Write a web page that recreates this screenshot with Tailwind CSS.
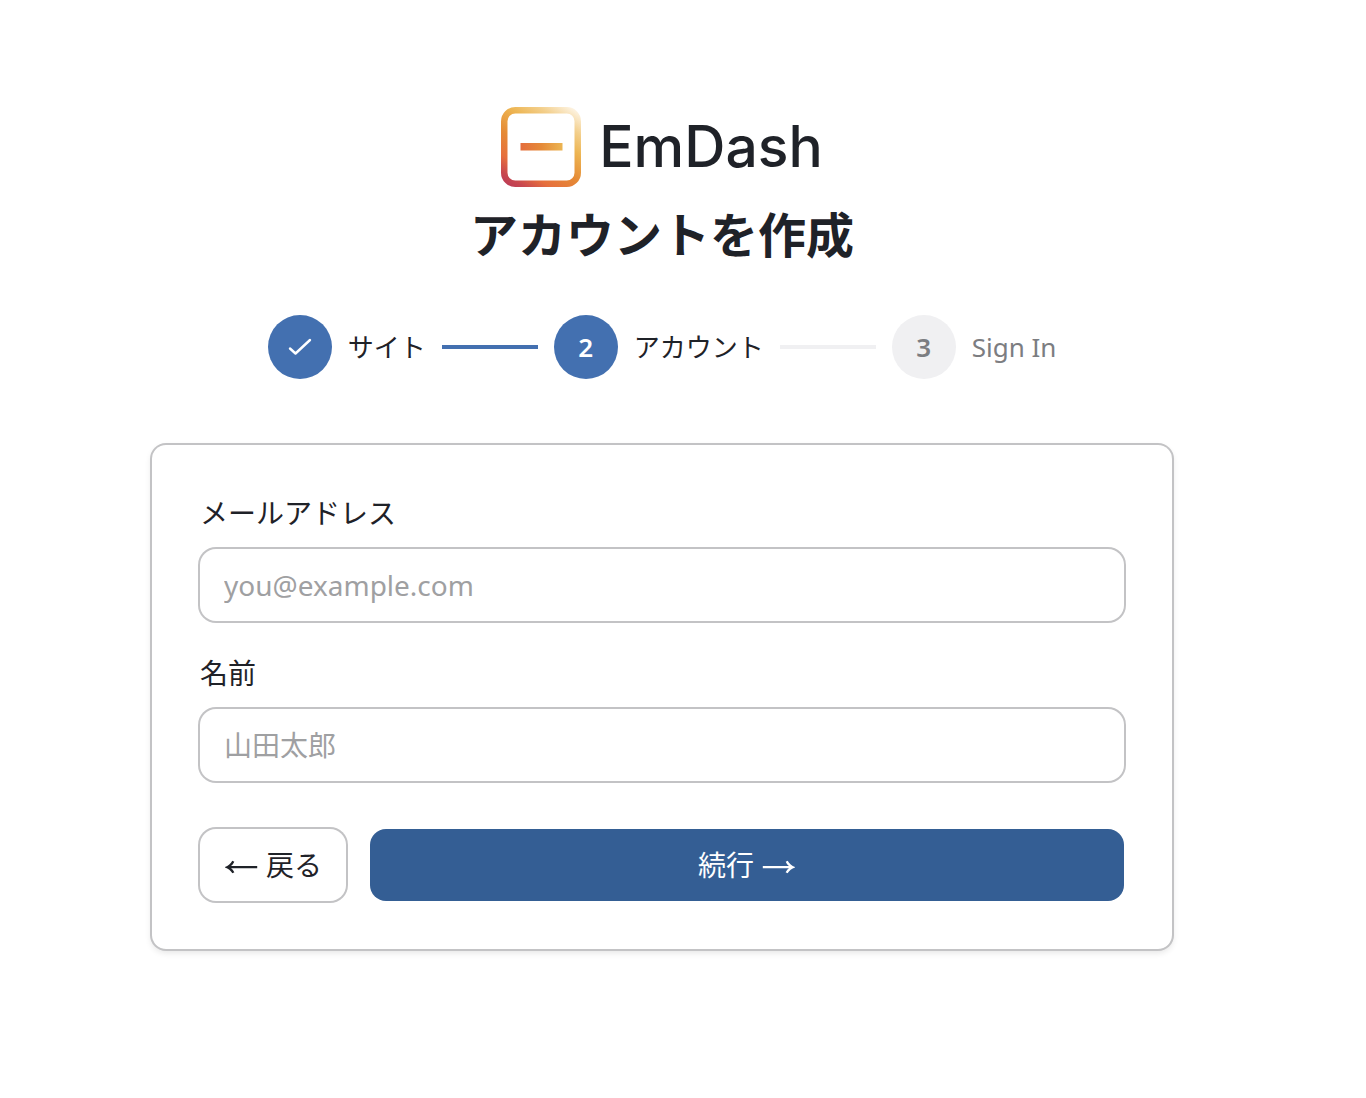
<!DOCTYPE html>
<html lang="ja">
<head>
    <meta charset="UTF-8">
    <meta name="viewport" content="width=device-width, initial-scale=1.0">
    <title>アカウントを作成 - EmDash</title>
    <script src="https://cdn.jsdelivr.net/npm/@tailwindcss/browser@4"></script>
</head>
<body class="min-h-screen bg-white pr-[42px] font-['Noto_Sans','Noto_Sans_CJK_JP',sans-serif] text-[#1f2228]">
    <main class="mx-auto w-full max-w-[1020px] pt-[107px] pb-16">
        <header class="flex flex-col items-center">
            <div class="flex items-center gap-[18px]">
                <svg class="size-20" viewBox="0 0 80 80" fill="none" aria-hidden="true">
                    <defs>
                        <linearGradient id="frame" x1="12" y1="82" x2="68" y2="-2" gradientUnits="userSpaceOnUse">
                            <stop offset="0" stop-color="#bd3c55"/>
                            <stop offset="0.08" stop-color="#c8474f"/>
                            <stop offset="0.22" stop-color="#e66f3d"/>
                            <stop offset="0.42" stop-color="#e58a35"/>
                            <stop offset="0.65" stop-color="#edb552"/>
                            <stop offset="0.82" stop-color="#f3cf8c"/>
                            <stop offset="1" stop-color="#fdf4e4"/>
                        </linearGradient>
                        <linearGradient id="dash" x1="19" y1="0" x2="62" y2="0" gradientUnits="userSpaceOnUse">
                            <stop offset="0" stop-color="#e46c3c"/>
                            <stop offset="0.5" stop-color="#e58a38"/>
                            <stop offset="1" stop-color="#ecb653"/>
                        </linearGradient>
                    </defs>
                    <rect x="3.25" y="3.25" width="73.5" height="73.5" rx="11" stroke="url(#frame)" stroke-width="6.5"/>
                    <rect x="19.5" y="36" width="42" height="7.5" fill="url(#dash)"/>
                </svg>
                <span class="font-['Inter',sans-serif] text-[57px] leading-20 font-medium">EmDash</span>
            </div>
            <h1 class="mt-4 text-5xl leading-16 font-bold">アカウントを作成</h1>
        </header>

        <!-- Steps -->
        <ol class="mt-12 flex items-center justify-center gap-4 text-[26px] leading-10">
            <li class="flex items-center gap-4">
                <span class="flex size-16 items-center justify-center rounded-full bg-[#4370b0] text-white">
                    <svg class="size-7" viewBox="0 0 28 28" fill="none" stroke="currentColor" stroke-width="2.4" stroke-linecap="round" stroke-linejoin="round" aria-hidden="true">
                        <path d="M4 15.5l5.5 5L24 7"/>
                    </svg>
                </span>
                <span>サイト</span>
            </li>
            <li class="h-1 w-24 bg-[#4370b0]" aria-hidden="true"></li>
            <li class="flex items-center gap-4" aria-current="step">
                <span class="flex size-16 items-center justify-center rounded-full bg-[#4370b0] font-semibold text-white">2</span>
                <span>アカウント</span>
            </li>
            <li class="h-1 w-24 bg-[#f0f0f2]" aria-hidden="true"></li>
            <li class="flex items-center gap-4 text-[#7c7d81]">
                <span class="flex size-16 items-center justify-center rounded-full bg-[#f0f0f2] font-semibold">3</span>
                <span>Sign In</span>
            </li>
        </ol>

        <!-- Account form -->
        <form class="mt-[66px] rounded-[14px] p-12 text-[28px] leading-10 ring-2 ring-[#c3c3c5] shadow-[0_3px_6px_1px_rgba(0,0,0,0.1)]">
            <label for="email" class="block">メールアドレス</label>
            <input type="email" id="email" placeholder="you@example.com" class="mt-4 block h-18 w-full rounded-2xl px-6 ring-2 ring-[#c3c3c5] placeholder:text-[#9fa0a2] focus:outline-none focus:ring-[#4370b0]">
            <label for="name" class="mt-8 block">名前</label>
            <input type="text" id="name" placeholder="山田太郎" class="mt-4 block h-18 w-full rounded-2xl px-6 ring-2 ring-[#c3c3c5] placeholder:text-[#9fa0a2] focus:outline-none focus:ring-[#4370b0]">
            <div class="mt-12 flex gap-6">
                <button type="button" class="flex h-18 items-center gap-2 rounded-2xl px-6 ring-2 ring-[#c3c3c5] hover:bg-gray-50">
                    <svg class="h-8 w-[34px]" viewBox="0 0 34 32" aria-hidden="true">
                        <path fill="currentColor" d="M1 17.9C4.2 16.8 6.8 14.7 8.3 11.7L10.3 12.7C9.5 14.5 8.3 16 7 17H33.2V19.2H7C8.4 20.2 9.6 21.6 10.4 23.3L8.4 24.3C6.8 21.4 4.2 19.3 1 18.4Z"/>
                    </svg>
                    戻る
                </button>
                <button type="submit" class="flex h-18 flex-1 items-center justify-center gap-2 rounded-2xl bg-[#345e94] text-white hover:bg-[#4370b0]">
                    続行
                    <svg class="h-8 w-[34px]" viewBox="0 0 34 32" aria-hidden="true">
                        <path fill="currentColor" d="M33 17.9C29.8 16.8 27.2 14.7 25.7 11.7L23.7 12.7C24.5 14.5 25.7 16 27 17H0.8V19.2H27C25.6 20.2 24.4 21.6 23.6 23.3L25.6 24.3C27.2 21.4 29.8 19.3 33 18.4Z"/>
                    </svg>
                </button>
            </div>
        </form>
    </main>
</body>
</html>
